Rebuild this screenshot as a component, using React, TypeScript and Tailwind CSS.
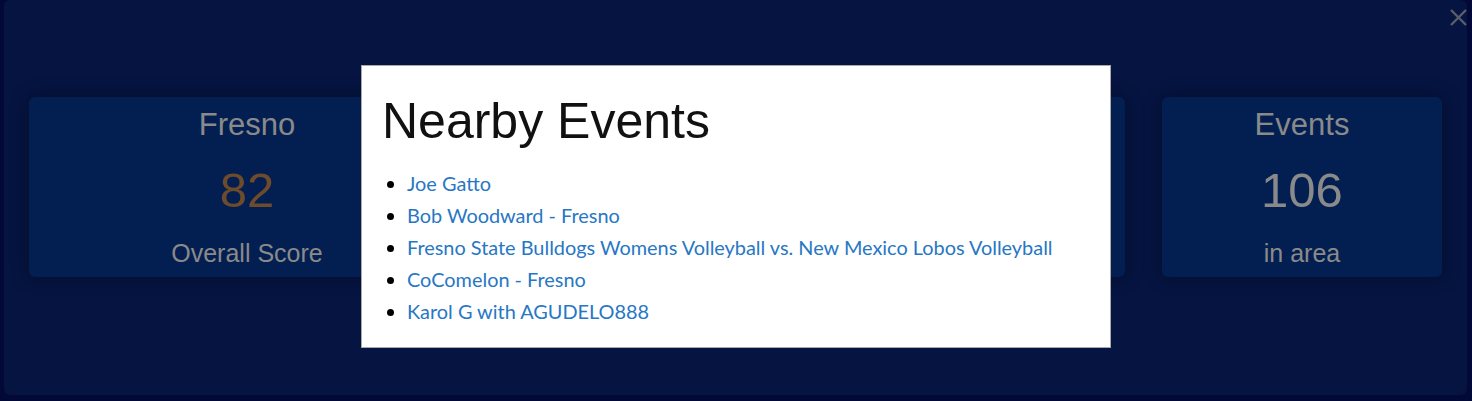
import React from "react";

const events = [
  "Joe Gatto",
  "Bob Woodward - Fresno",
  "Fresno State Bulldogs Womens Volleyball vs. New Mexico Lobos Volleyball",
  "CoComelon - Fresno",
  "Karol G with AGUDELO888",
];

function Card({
  title,
  value,
  sub,
  valueClass,
  className,
}: {
  title: string;
  value: string;
  sub: string;
  valueClass: string;
  className: string;
}) {
  return (
    <div
      className={`h-[180px] rounded-[6px] bg-[#031f52] shadow-[0_0_18px_rgba(0,0,0,0.35)] flex flex-col items-center pt-[10px] ${className}`}
      style={{ fontFamily: '"Liberation Sans", Arial, sans-serif' }}
    >
      <div className="text-[31px] leading-[35px] text-[#8a8a8a]">{title}</div>
      <div className={`mt-[20px] text-[49px] leading-[56px] ${valueClass}`}>{value}</div>
      <div className="mt-[21px] text-[25px] leading-[29px] text-[#8a8a8a]">{sub}</div>
    </div>
  );
}

export default function App() {
  return (
    <div className="h-[401px] w-[1472px] bg-[#020936] pl-[4px] pr-[5px] pb-[6px] overflow-hidden relative">
      <div className="relative h-full rounded-[6px] bg-[#051441] pt-[97px] px-[25px]">
        <div className="flex gap-[37px]">
          <Card title="Fresno" value="82" sub="Overall Score" valueClass="text-[#6d4b2b]" className="w-[436px]" />
          <Card title="" value="" sub="" valueClass="text-[#8a8a8a]" className="flex-1" />
          <Card title="Events" value="106" sub="in area" valueClass="text-[#8a8a8a]" className="w-[280px]" />
        </div>
        <svg
          className="absolute right-[0px] top-[9px]"
          width="17"
          height="17"
          viewBox="0 0 17 17"
        >
          <path d="M1 1 L16 16 M16 1 L1 16" stroke="#5a5e6c" strokeWidth="2.4" />
        </svg>
      </div>

      <div className="absolute left-[361px] top-[65px] w-[750px] h-[283px] bg-white border border-[#a9a9a9] px-[20px] pt-[26px]">
        <h1
          className="text-[50px] leading-[58px] text-[#111111]"
          style={{ fontFamily: '"Liberation Sans", Arial, sans-serif' }}
        >
          Nearby Events
        </h1>
        <ul
          className="mt-[17px] list-disc pl-[25px] text-[19.9px] leading-[32px] text-black"
          style={{ fontFamily: 'Lato, "Noto Sans", sans-serif' }}
        >
          {events.map((e) => (
            <li key={e}>
              <a className="text-[#2777c4]">{e}</a>
            </li>
          ))}
        </ul>
      </div>
    </div>
  );
}
